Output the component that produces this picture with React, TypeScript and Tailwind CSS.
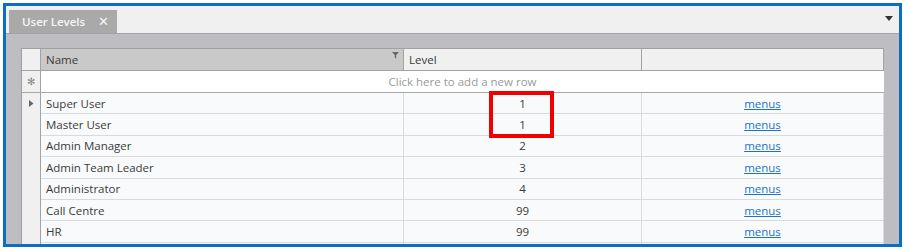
const rows: { name: string; level: number }[] = [
  { name: "Super User", level: 1 },
  { name: "Master User", level: 1 },
  { name: "Admin Manager", level: 2 },
  { name: "Admin Team Leader", level: 3 },
  { name: "Administrator", level: 4 },
  { name: "Call Centre", level: 99 },
  { name: "HR", level: 99 },
];

const font = { fontFamily: '"Open Sans", "Noto Sans", sans-serif' };

export default function App() {
  return (
    <div className="w-[909px] h-[252px] bg-white p-[3px] overflow-hidden" style={font}>
      <div className="relative w-[899px] h-[244px] border-[3px] border-[#0a6ec4] flex flex-col overflow-hidden">
        {/* tab strip */}
        <div className="h-[28px] shrink-0 bg-[#f0f0f0] border-b border-[#a3a3a3] flex items-end pl-[3px] pr-[6px]">
          <div className="h-[23px] w-[108px] bg-[#a9a9a9] flex items-center pl-[13px] gap-[13px] text-[11.5px] font-semibold text-[#f6f6f6]">
            <span>User Levels</span>
            <span className="text-[13px] font-normal leading-none">✕</span>
          </div>
          <div className="flex-1" />
          <div className="self-center mb-[2px] w-0 h-0 border-l-[4px] border-r-[4px] border-t-[5px] border-l-transparent border-r-transparent border-t-[#333]" />
        </div>

        {/* panel */}
        <div className="flex-1 bg-[#bebec2] pl-[15px] pt-[14px] pr-[14px] overflow-hidden">
          <div className="w-[863px] bg-white border-l border-t border-[#a0a0a0] text-[11.5px] text-[#3a3a3a]">
            {/* header */}
            <div className="flex h-[22px] border-b border-[#a3a3a3]">
              <div className="w-[19px] bg-[#f0f0f0] border-r border-[#a3a3a3]" />
              <div className="relative w-[363px] bg-[#c9c9c9] border-r border-[#a3a3a3] flex items-center pl-[5px]">
                Name
                <svg className="absolute right-[4px] top-[3px]" width="7" height="7" viewBox="0 0 7 7">
                  <path d="M0 0H7L4.2 3V6.5L2.8 5.8V3Z" fill="#666" />
                </svg>
              </div>
              <div className="w-[238px] bg-[#f0f0f0] border-r border-[#a3a3a3] flex items-center pl-[5px]">Level</div>
              <div className="w-[242px] bg-[#f0f0f0] border-r border-[#a3a3a3]" />
            </div>

            {/* new row */}
            <div className="flex h-[22px] border-b border-[#a8a8a8]">
              <div className="w-[19px] bg-[#f0f0f0] border-r border-[#a3a3a3] flex items-center justify-center text-[10px] text-[#888]">✻</div>
              <div className="flex-1 bg-white flex items-center justify-center text-[#9a9a9a]">Click here to add a new row</div>
            </div>

            {/* rows */}
            {rows.map((r, i) => (
              <div key={r.name} className="flex h-[21.4px]">
                <div className="w-[19px] bg-[#f0f0f0] border-r border-[#a3a3a3] flex items-center justify-center">
                  {i === 0 && (
                    <svg width="5" height="7" viewBox="0 0 5 7">
                      <path d="M0 0L4.5 3.5L0 7Z" fill="#666" />
                    </svg>
                  )}
                </div>
                <div className="w-[363px] bg-[#f9fafb] border-r border-b border-[#dadada] flex items-center pl-[5px]">{r.name}</div>
                <div className="w-[238px] bg-[#f9fafb] border-r border-b border-[#dadada] flex items-center justify-center">{r.level}</div>
                <div className="w-[242px] bg-[#f9fafb] border-r border-b border-[#dadada] flex items-center justify-center">
                  <span className="text-[#1a73c8] underline">menus</span>
                </div>
              </div>
            ))}

            {/* partially visible next row */}
            <div className="flex h-[21px]">
              <div className="w-[19px] bg-[#f0f0f0] border-r border-[#a3a3a3]" />
              <div className="w-[363px] bg-[#f9fafb] border-r border-[#dadada]" />
              <div className="w-[238px] bg-[#f9fafb] border-r border-[#dadada]" />
              <div className="w-[242px] bg-[#f9fafb] border-r border-[#dadada]" />
            </div>
          </div>
        </div>

        {/* highlight */}
        <div className="absolute left-[483px] top-[85px] w-[65px] h-[47px] border-[4px] border-[#f00000]" />
      </div>
    </div>
  );
}
